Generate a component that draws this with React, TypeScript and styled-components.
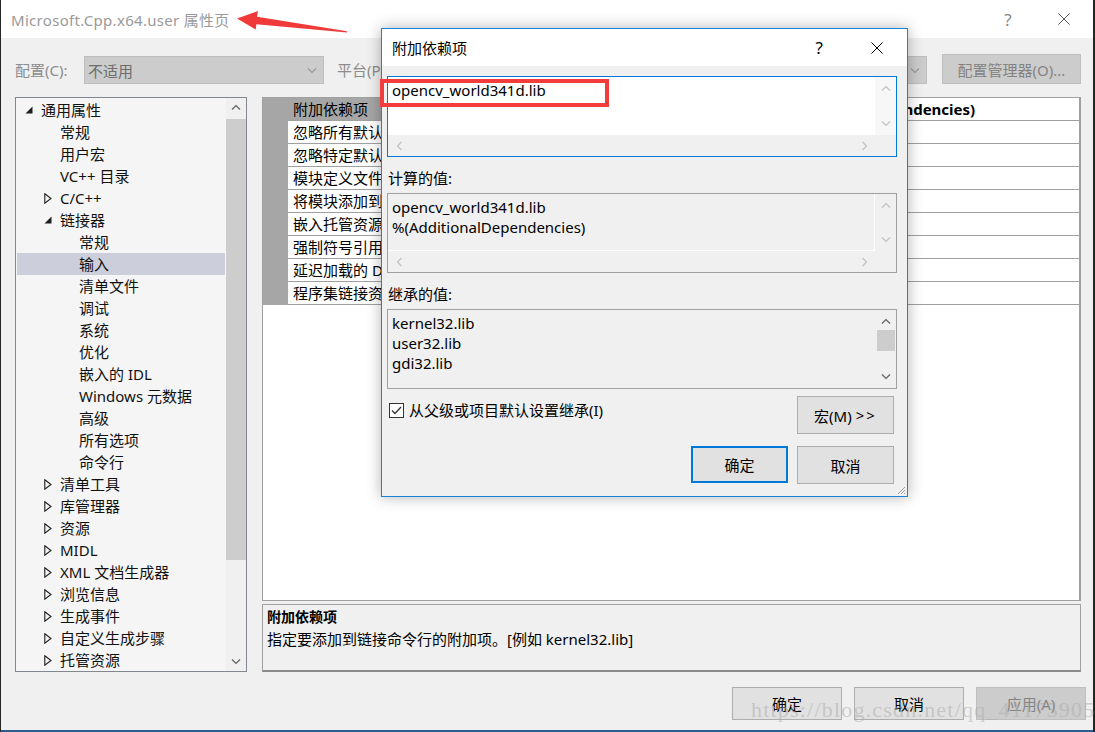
import React from 'react';
import styled, { createGlobalStyle, css } from 'styled-components';

const FONT = `"Noto Sans", "Noto Sans CJK SC", sans-serif`;

const GlobalStyle = createGlobalStyle`
  html, body {
    margin: 0;
    padding: 0;
  }
  body {
    background: #262626;
    font-family: ${FONT};
    font-size: 15px;
    color: #000;
  }
  * {
    box-sizing: border-box;
  }
`;

type Dir = 'up' | 'down' | 'left' | 'right';

const chevronPaths: Record<Dir, string> = {
  up: 'M1 6.5 L5 2.5 L9 6.5',
  down: 'M1 3.5 L5 7.5 L9 3.5',
  left: 'M6.5 1 L2.5 5 L6.5 9',
  right: 'M3.5 1 L7.5 5 L3.5 9',
};

const Chevron = ({ dir, color = '#606060' }: { dir: Dir; color?: string }) => (
  <svg width={10} height={10} viewBox="0 0 10 10">
    <path d={chevronPaths[dir]} fill="none" stroke={color} strokeWidth={1.2} />
  </svg>
);

const CloseGlyph = ({ color = '#000' }: { color?: string }) => (
  <svg width={12} height={12} viewBox="0 0 12 12">
    <path d="M0.5 0.5 L11.5 11.5 M11.5 0.5 L0.5 11.5" stroke={color} strokeWidth={1} />
  </svg>
);

const ExpandedArrow = () => (
  <svg width={8} height={8} viewBox="0 0 8 8">
    <polygon points="7.5,0.5 7.5,7.5 0.5,7.5" fill="#1e1e1e" />
  </svg>
);

const CollapsedArrow = () => (
  <svg width={8} height={11} viewBox="0 0 8 11">
    <polygon points="0.8,0.8 7,5.5 0.8,10.2" fill="none" stroke="#1e1e1e" strokeWidth={1.1} />
  </svg>
);

interface TTreeItem {
  label: string;
  level: number;
  state?: 'open' | 'closed';
  selected?: boolean;
}

const treeItems: TTreeItem[] = [
  { label: '通用属性', level: 0, state: 'open' },
  { label: '常规', level: 1 },
  { label: '用户宏', level: 1 },
  { label: 'VC++ 目录', level: 1 },
  { label: 'C/C++', level: 1, state: 'closed' },
  { label: '链接器', level: 1, state: 'open' },
  { label: '常规', level: 2 },
  { label: '输入', level: 2, selected: true },
  { label: '清单文件', level: 2 },
  { label: '调试', level: 2 },
  { label: '系统', level: 2 },
  { label: '优化', level: 2 },
  { label: '嵌入的 IDL', level: 2 },
  { label: 'Windows 元数据', level: 2 },
  { label: '高级', level: 2 },
  { label: '所有选项', level: 2 },
  { label: '命令行', level: 2 },
  { label: '清单工具', level: 1, state: 'closed' },
  { label: '库管理器', level: 1, state: 'closed' },
  { label: '资源', level: 1, state: 'closed' },
  { label: 'MIDL', level: 1, state: 'closed' },
  { label: 'XML 文档生成器', level: 1, state: 'closed' },
  { label: '浏览信息', level: 1, state: 'closed' },
  { label: '生成事件', level: 1, state: 'closed' },
  { label: '自定义生成步骤', level: 1, state: 'closed' },
  { label: '托管资源', level: 1, state: 'closed' },
];

const gridRows = [
  { name: '附加依赖项', value: 'opencv_world341d.lib;%(AdditionalDependencies)', selected: true },
  { name: '忽略所有默认库', value: '' },
  { name: '忽略特定默认库', value: '' },
  { name: '模块定义文件', value: '' },
  { name: '将模块添加到程序集', value: '' },
  { name: '嵌入托管资源文件', value: '' },
  { name: '强制符号引用', value: '' },
  { name: '延迟加载的 DLL', value: '' },
  { name: '程序集链接资源', value: '' },
];

const App = () => {
  return (
    <S.Screen>
      <GlobalStyle />
      <S.Window>
        <S.TitleBar>
          <S.TitleText>Microsoft.Cpp.x64.user 属性页</S.TitleText>
          <S.TitleButtons>
            <S.TitleButton>
              <S.HelpMark $color="#8a8a8a">?</S.HelpMark>
            </S.TitleButton>
            <S.TitleButton>
              <CloseGlyph color="#555" />
            </S.TitleButton>
          </S.TitleButtons>
        </S.TitleBar>

        <S.Body>
          <S.ConfigRow>
            <S.FieldLabel $width={69}>配置(C):</S.FieldLabel>
            <S.Combo $width={240}>
              <span>不适用</span>
              <Chevron dir="down" color="#9a9a9a" />
            </S.Combo>
            <S.FieldLabel $width={63} style={{ marginLeft: 13 }}>
              平台(P):
            </S.FieldLabel>
            <S.Combo>
              <span>活动(x64)</span>
              <Chevron dir="down" color="#9a9a9a" />
            </S.Combo>
            <S.DisabledButton>配置管理器(O)...</S.DisabledButton>
          </S.ConfigRow>

          <S.MainArea>
            <S.Tree>
              <S.TreeList>
                {treeItems.map((item, i) => (
                  <S.TreeRow key={i} $level={item.level} $selected={item.selected}>
                    <S.Toggle>
                      {item.state === 'open' && <ExpandedArrow />}
                      {item.state === 'closed' && <CollapsedArrow />}
                    </S.Toggle>
                    {item.label}
                  </S.TreeRow>
                ))}
              </S.TreeList>
              <S.TreeScroll>
                <S.ScrollButton>
                  <Chevron dir="up" />
                </S.ScrollButton>
                <S.TreeThumb />
                <S.ScrollButton>
                  <Chevron dir="down" />
                </S.ScrollButton>
              </S.TreeScroll>
            </S.Tree>

            <S.RightColumn>
              <S.PropGrid>
                {gridRows.map((row) => (
                  <S.PropRow key={row.name}>
                    <S.Gutter />
                    <S.NameCell $selected={row.selected}>{row.name}</S.NameCell>
                    <S.ValueCell>{row.value}</S.ValueCell>
                  </S.PropRow>
                ))}
              </S.PropGrid>
              <S.Description>
                <S.DescTitle>附加依赖项</S.DescTitle>
                <S.DescText>指定要添加到链接命令行的附加项。[例如 kernel32.lib]</S.DescText>
              </S.Description>
            </S.RightColumn>
          </S.MainArea>

          <S.ButtonRow>
            <S.Button>确定</S.Button>
            <S.Button>取消</S.Button>
            <S.Button $disabled>应用(A)</S.Button>
          </S.ButtonRow>
        </S.Body>
      </S.Window>

      <S.TitleArrow width={120} height={40} viewBox="230 5 120 40">
        <polygon
          points="237,18.5 258,11 257,16.8 347,31.3 346.8,32.6 256.4,24.2 255.7,29.5"
          fill="#f03a3a"
        />
      </S.TitleArrow>

      <S.Dialog>
        <S.DialogTitle>
          <span>附加依赖项</span>
          <S.DialogTitleButtons>
            <S.HelpMark $color="#000">?</S.HelpMark>
            <CloseGlyph />
          </S.DialogTitleButtons>
        </S.DialogTitle>

        <S.DialogBody>
          <S.EditBox $focused $hScroll>
            <S.EditText>opencv_world341d.lib</S.EditText>
            <S.VScroll $bg="#f7f7f7">
              <Chevron dir="up" color="#c2c2c2" />
              <Chevron dir="down" color="#c2c2c2" />
            </S.VScroll>
            <S.HScroll>
              <Chevron dir="left" color="#c2c2c2" />
              <Chevron dir="right" color="#c2c2c2" />
            </S.HScroll>
          </S.EditBox>

          <S.SectionLabel>计算的值:</S.SectionLabel>
          <S.EditBox $hScroll>
            <S.EditText $readOnly>
              opencv_world341d.lib
              <br />
              %(AdditionalDependencies)
            </S.EditText>
            <S.VScroll>
              <Chevron dir="up" color="#c2c2c2" />
              <Chevron dir="down" color="#c2c2c2" />
            </S.VScroll>
            <S.HScroll>
              <Chevron dir="left" color="#c2c2c2" />
              <Chevron dir="right" color="#c2c2c2" />
            </S.HScroll>
          </S.EditBox>

          <S.SectionLabel>继承的值:</S.SectionLabel>
          <S.EditBox>
            <S.EditText $readOnly $plain>
              kernel32.lib
              <br />
              user32.lib
              <br />
              gdi32.lib
            </S.EditText>
            <S.VScroll>
              <Chevron dir="up" />
              <S.EditThumb />
              <S.Spacer />
              <Chevron dir="down" />
            </S.VScroll>
          </S.EditBox>

          <S.OptionRow>
            <S.CheckLabel>
              <S.CheckBox>
                <svg width={13} height={13} viewBox="0 0 13 13">
                  <path d="M2 6.5 L5 9.5 L11 3" fill="none" stroke="#333" strokeWidth={1.3} />
                </svg>
              </S.CheckBox>
              从父级或项目默认设置继承(I)
            </S.CheckLabel>
            <S.DialogButton>
              宏(M) <S.Chevrons>&gt;&gt;</S.Chevrons>
            </S.DialogButton>
          </S.OptionRow>

          <S.DialogButtons>
            <S.DialogButton $default>确定</S.DialogButton>
            <S.DialogButton>取消</S.DialogButton>
          </S.DialogButtons>
        </S.DialogBody>

        <S.Grip width={10} height={10} viewBox="0 0 10 10">
          <path d="M9 2 L2 9 M9 5 L5 9 M9 8 L8 9" stroke="#a0a0a0" strokeWidth={1} />
        </S.Grip>
      </S.Dialog>

      <S.RedBox />
      <S.Watermark>https://blog.csdn.net/qq_41175905</S.Watermark>
    </S.Screen>
  );
};

export default App;

const S = {
  Screen: styled.div`
    position: relative;
    width: 1095px;
    height: 732px;
    overflow: hidden;
    background: #262626;
  `,

  Window: styled.div`
    display: flex;
    flex-direction: column;
    width: 1092px;
    height: 732px;
    margin-left: 1px;
    background: #f0f0f0;
    border-bottom: 2px solid #2a5f8f;
  `,

  TitleBar: styled.div`
    display: flex;
    align-items: center;
    justify-content: space-between;
    height: 38px;
    padding-left: 10px;
    background: #fff;
    flex: none;
  `,

  TitleText: styled.div`
    font-size: 15px;
    letter-spacing: 0.3px;
    color: #9a9a9a;
  `,

  TitleButtons: styled.div`
    display: flex;
    height: 100%;
    margin-right: 1px;
  `,

  TitleButton: styled.div`
    display: flex;
    align-items: center;
    justify-content: center;
    width: 56px;
    height: 100%;
  `,

  HelpMark: styled.span<{ $color: string }>`
    font-size: 17px;
    color: ${(p) => p.$color};
  `,

  Body: styled.div`
    display: flex;
    flex-direction: column;
    flex: 1;
    padding: 0 12px 0 14px;
  `,

  ConfigRow: styled.div`
    display: flex;
    align-items: flex-start;
    height: 59px;
    padding-top: 18px;
    flex: none;
  `,

  FieldLabel: styled.div<{ $width: number }>`
    width: ${(p) => p.$width}px;
    line-height: 28px;
    color: #8c8c8c;
    white-space: nowrap;
  `,

  Combo: styled.div<{ $width?: number }>`
    display: flex;
    align-items: center;
    justify-content: space-between;
    ${(p) => (p.$width ? `width: ${p.$width}px;` : 'flex: 1;')}
    height: 28px;
    padding: 0 6px 0 3px;
    background: #cccccc;
    border: 1px solid #bfbfbf;
    color: #6d6d6d;
  `,

  DisabledButton: styled.div`
    display: flex;
    align-items: center;
    justify-content: center;
    width: 139px;
    height: 30px;
    margin-left: 15px;
    margin-top: -2px;
    background: #cccccc;
    border: 1px solid #bfbfbf;
    color: #838383;
  `,

  MainArea: styled.div`
    display: grid;
    grid-template-columns: 232px 1fr;
    column-gap: 15px;
    height: 575px;
    flex: none;
  `,

  Tree: styled.div`
    display: grid;
    grid-template-columns: 1fr 20px;
    background: #f5f5f5;
    border: 1px solid #828790;
  `,

  TreeList: styled.div`
    padding-top: 1px;
    overflow: hidden;
  `,

  TreeRow: styled.div<{ $level: number; $selected?: boolean }>`
    display: flex;
    align-items: center;
    height: 22px;
    margin: 0 1px;
    padding-left: ${(p) => 8 + p.$level * 19}px;
    line-height: 22px;
    white-space: nowrap;
    color: #111;
    background: ${(p) => (p.$selected ? '#cccedb' : 'transparent')};
  `,

  Toggle: styled.span`
    display: flex;
    align-items: center;
    width: 16px;
    height: 22px;
    flex: none;
  `,

  TreeScroll: styled.div`
    display: flex;
    flex-direction: column;
    background: #f0f0f0;
  `,

  ScrollButton: styled.div`
    display: flex;
    align-items: center;
    justify-content: center;
    height: 20px;
    flex: none;
  `,

  TreeThumb: styled.div`
    height: 441px;
    margin: 1px 0 0;
    background: #cdcdcd;
    flex: none;
    & + * {
      margin-top: auto;
    }
  `,

  RightColumn: styled.div`
    display: flex;
    flex-direction: column;
    gap: 3px;
  `,

  PropGrid: styled.div`
    height: 504px;
    background: #fff;
    border: 1px solid #a0a0a0;
    border-right-width: 2px;
  `,

  PropRow: styled.div`
    display: grid;
    grid-template-columns: 25px 310px 1fr;
    height: 23px;
    line-height: 22px;
  `,

  Gutter: styled.div`
    background: #a6a6a6;
  `,

  NameCell: styled.div<{ $selected?: boolean }>`
    padding-left: 5px;
    white-space: nowrap;
    overflow: hidden;
    border-bottom: 1px solid #a0a0a0;
    border-right: 1px solid #a0a0a0;
    background: ${(p) => (p.$selected ? '#a6a6a6' : '#fff')};
  `,

  ValueCell: styled.div`
    padding-left: 6px;
    font-weight: 700;
    white-space: nowrap;
    overflow: hidden;
    border-bottom: 1px solid #a0a0a0;
  `,

  Description: styled.div`
    height: 68px;
    padding: 2px 4px;
    background: #f0f0f0;
    border: 1px solid #a0a0a0;
    border-bottom: 2px solid #8c8c8c;
    line-height: 20px;
  `,

  DescTitle: styled.div`
    font-size: 14px;
    font-weight: 700;
  `,

  DescText: styled.div`
    margin-top: 2px;
    font-size: 15px;
  `,

  ButtonRow: styled.div`
    display: flex;
    justify-content: flex-end;
    gap: 12px;
    margin-top: 15px;
    margin-right: -5px;
  `,

  Button: styled.div<{ $disabled?: boolean }>`
    display: flex;
    align-items: center;
    justify-content: center;
    width: 110px;
    height: 33px;
    background: ${(p) => (p.$disabled ? '#cccccc' : '#e1e1e1')};
    border: 1px solid ${(p) => (p.$disabled ? '#bfbfbf' : '#adadad')};
    color: ${(p) => (p.$disabled ? '#838383' : '#000')};
  `,

  TitleArrow: styled.svg`
    position: absolute;
    left: 230px;
    top: 5px;
  `,

  Dialog: styled.div`
    position: absolute;
    left: 381px;
    top: 28px;
    width: 527px;
    height: 469px;
    display: flex;
    flex-direction: column;
    background: #f0f0f0;
    border: 1px solid #1883d7;
    box-shadow: 0 0 14px rgba(0, 0, 0, 0.3);
  `,

  DialogTitle: styled.div`
    display: flex;
    align-items: center;
    justify-content: space-between;
    height: 37px;
    padding-left: 10px;
    background: #fff;
    flex: none;
  `,

  DialogTitleButtons: styled.div`
    display: flex;
    align-items: center;
    gap: 48px;
    margin-right: 24px;
  `,

  DialogBody: styled.div`
    display: flex;
    flex-direction: column;
    padding: 10px 10px 0 5px;
  `,

  EditBox: styled.div<{ $focused?: boolean; $hScroll?: boolean }>`
    display: grid;
    grid-template-columns: 1fr 21px;
    grid-template-rows: ${(p) => (p.$hScroll ? '1fr 21px' : '1fr')};
    height: ${(p) => (p.$focused ? 81 : 80)}px;
    background: #f0f0f0;
    border: 1px solid ${(p) => (p.$focused ? '#0078d7' : '#a0a0a0')};
  `,

  EditText: styled.div<{ $readOnly?: boolean; $plain?: boolean }>`
    padding: 3px 4px;
    line-height: 20px;
    background: ${(p) => (p.$readOnly ? '#f0f0f0' : '#fff')};
    ${(p) =>
      p.$readOnly &&
      !p.$plain &&
      css`
        border-right: 1px solid #fff;
        border-bottom: 1px solid #fff;
      `}
  `,

  VScroll: styled.div<{ $bg?: string }>`
    display: flex;
    flex-direction: column;
    align-items: center;
    justify-content: space-between;
    padding: 7px 0 7px;
    background: ${(p) => p.$bg ?? '#f0f0f0'};
  `,

  EditThumb: styled.div`
    width: 18px;
    height: 21px;
    margin-top: 3px;
    background: #cdcdcd;
  `,

  Spacer: styled.div`
    flex: 1;
  `,

  HScroll: styled.div`
    display: flex;
    align-items: center;
    justify-content: space-between;
    padding: 0 6px 0 7px;
  `,

  SectionLabel: styled.div`
    margin: 11px 0 5px 1px;
    line-height: 20px;
  `,

  OptionRow: styled.div`
    display: flex;
    justify-content: space-between;
    align-items: flex-start;
    margin-top: 7px;
    padding-right: 3px;
  `,

  CheckLabel: styled.div`
    display: flex;
    align-items: center;
    gap: 5px;
    margin: 4px 0 0 2px;
    line-height: 20px;
  `,

  CheckBox: styled.div`
    display: flex;
    align-items: center;
    justify-content: center;
    width: 15px;
    height: 15px;
    background: #fff;
    border: 1px solid #333;
  `,

  Chevrons: styled.span`
    margin-left: 4px;
    letter-spacing: 2px;
  `,

  DialogButtons: styled.div`
    display: flex;
    justify-content: flex-end;
    gap: 9px;
    margin-top: 12px;
    padding-right: 3px;
  `,

  DialogButton: styled.div<{ $default?: boolean }>`
    display: flex;
    align-items: center;
    justify-content: center;
    width: 97px;
    height: ${(p) => (p.$default ? 37 : 38)}px;
    background: #e1e1e1;
    border: ${(p) => (p.$default ? '2px solid #0078d7' : '1px solid #adadad')};
    white-space: nowrap;
  `,

  Grip: styled.svg`
    position: absolute;
    right: 1px;
    bottom: 1px;
  `,

  RedBox: styled.div`
    position: absolute;
    left: 380px;
    top: 79px;
    width: 229px;
    height: 28px;
    border: 4px solid #f33c3c;
  `,

  Watermark: styled.div`
    position: absolute;
    left: 751px;
    top: 697px;
    font-family: "Liberation Serif", "DejaVu Serif", serif;
    font-size: 22px;
    letter-spacing: 1.2px;
    color: rgba(170, 170, 170, 0.5);
    white-space: nowrap;
    pointer-events: none;
  `,
};
